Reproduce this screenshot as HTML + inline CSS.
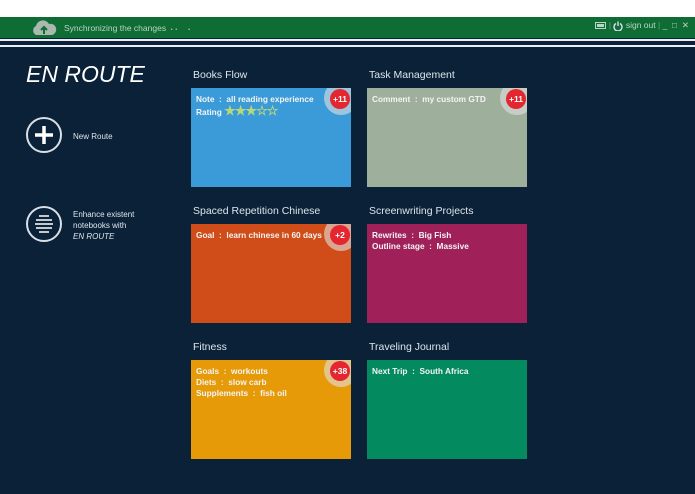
<!DOCTYPE html>
<html><head><meta charset="utf-8"><style>
*{margin:0;padding:0;box-sizing:border-box}
body{width:695px;height:494px;background:#0b2138;font-family:"Liberation Sans",sans-serif;position:relative;overflow:hidden;color:#fff}
.top{position:absolute;left:0;top:0;width:695px;height:17px;background:#fff}
.bar{position:absolute;left:0;top:17px;width:695px;height:21px;background:#0f6c34}
.l1{position:absolute;left:0;top:39px;width:695px;height:2px;background:#e8eef2}
.l2{position:absolute;left:0;top:45px;width:695px;height:2px;background:#e8eef2}
.sync{position:absolute;left:64px;top:23px;font-size:8.5px;color:#b9d6c2}
.right{position:absolute;right:6px;top:20px;font-size:8.5px;color:#b9d6c2}
h1{position:absolute;left:26px;top:61px;font-size:23px;font-weight:normal;font-style:italic;letter-spacing:0px;color:#fff}
.circ{position:absolute;width:36px;height:36px;border:2px solid #d8dfe6;border-radius:50%}
.lbl{position:absolute;font-size:8px;line-height:11px;color:#dde5ec}
.title{position:absolute;font-size:10.5px;color:#dde5ec}
.tile{position:absolute;width:160px;height:99px;overflow:hidden;padding:6px 5px;font-size:8.3px;font-weight:bold;line-height:11px;color:#f4f4f4;white-space:pre}
.ring{position:absolute;right:-7px;top:-7px;width:34px;height:34px;border-radius:50%;background:rgba(225,225,225,0.6)}
.badge{position:absolute;right:1px;top:1px;width:20px;height:20px;border-radius:50%;background:#e3262f;font-size:8.5px;line-height:20px;text-align:center;color:#fff;font-weight:bold}
.star{color:#b6d77a;font-size:13px;letter-spacing:-1px}
</style></head><body>
<div class="top"></div><div class="bar"></div><div class="l1"></div><div class="l2"></div>
<svg style="position:absolute;left:31px;top:19px" width="26" height="17" viewBox="0 0 26 17"><path d="M5 16 A5 5 0 0 1 5 7 A7 7 0 0 1 18 5 A5.5 5.5 0 0 1 21 16 Z" fill="#aab8b0"/><path d="M13 15 V9 M10 11 L13 8 L16 11" stroke="#0f6c34" stroke-width="2" fill="none"/></svg>
<div class="sync">Synchronizing the changes &nbsp;<span style="font-size:5px">•&nbsp;&nbsp;•&nbsp;&nbsp;&nbsp;&nbsp;&nbsp;&nbsp;&nbsp;&nbsp;•</span></div>
<div class="right"><svg width="12" height="7" style="vertical-align:middle"><rect x="0.5" y="0.5" width="10" height="6" fill="none" stroke="#b9d6c2"/><rect x="2" y="2" width="7" height="3" fill="#b9d6c2"/></svg> <span style="opacity:.5">|</span> <svg width="10" height="10" style="vertical-align:middle"><path d="M3 2.5 A4 4 0 1 0 7 2.5" stroke="#dde" stroke-width="1.4" fill="none"/><path d="M5 0.5 V5" stroke="#dde" stroke-width="1.4"/></svg> sign out <span style="opacity:.5">|</span> _ &nbsp;□ &nbsp;✕</div>
<h1>EN ROUTE</h1>
<div class="circ" style="left:26px;top:117px"><svg width="32" height="32" style="position:absolute;left:0;top:0"><path d="M16 7 V25 M7 16 H25" stroke="#fff" stroke-width="3.5"/></svg></div>
<div class="lbl" style="left:73px;top:131px">New Route</div>
<div class="circ" style="left:26px;top:206px"><svg width="32" height="32" style="position:absolute;left:0;top:0"><path d="M11 8 H21 M8 12 H24 M7 16 H25 M8 20 H24 M11 24 H21" stroke="#fff" stroke-width="1.6"/></svg></div>
<div class="lbl" style="left:73px;top:209px">Enhance existent<br>notebooks with<br><i>EN ROUTE</i></div>

<div class="title" style="left:193px;top:69px">Books Flow</div>
<div class="title" style="left:369px;top:69px">Task Management</div>
<div class="title" style="left:193px;top:205px">Spaced Repetition Chinese</div>
<div class="title" style="left:369px;top:205px">Screenwriting Projects</div>
<div class="title" style="left:193px;top:341px">Fitness</div>
<div class="title" style="left:369px;top:341px">Traveling Journal</div>

<div class="tile" style="left:191px;top:88px;background:#3a9bd8"><div class="ring"></div><div class="badge">+11</div>Note  :  all reading experience<br>Rating <span class="star">★★★☆☆</span></div>
<div class="tile" style="left:367px;top:88px;background:#9eb09b"><div class="ring"></div><div class="badge">+11</div>Comment  :  my custom GTD</div>
<div class="tile" style="left:191px;top:224px;background:#d04d1a"><div class="ring"></div><div class="badge">+2</div>Goal  :  learn chinese in 60 days</div>
<div class="tile" style="left:367px;top:224px;background:#a0215a">Rewrites  :  Big Fish<br>Outline stage  :  Massive</div>
<div class="tile" style="left:191px;top:360px;background:#e69a08"><div class="ring"></div><div class="badge">+38</div>Goals  :  workouts<br>Diets  :  slow carb<br>Supplements  :  fish oil</div>
<div class="tile" style="left:367px;top:360px;background:#038b5f">Next Trip  :  South Africa</div>
</body></html>
